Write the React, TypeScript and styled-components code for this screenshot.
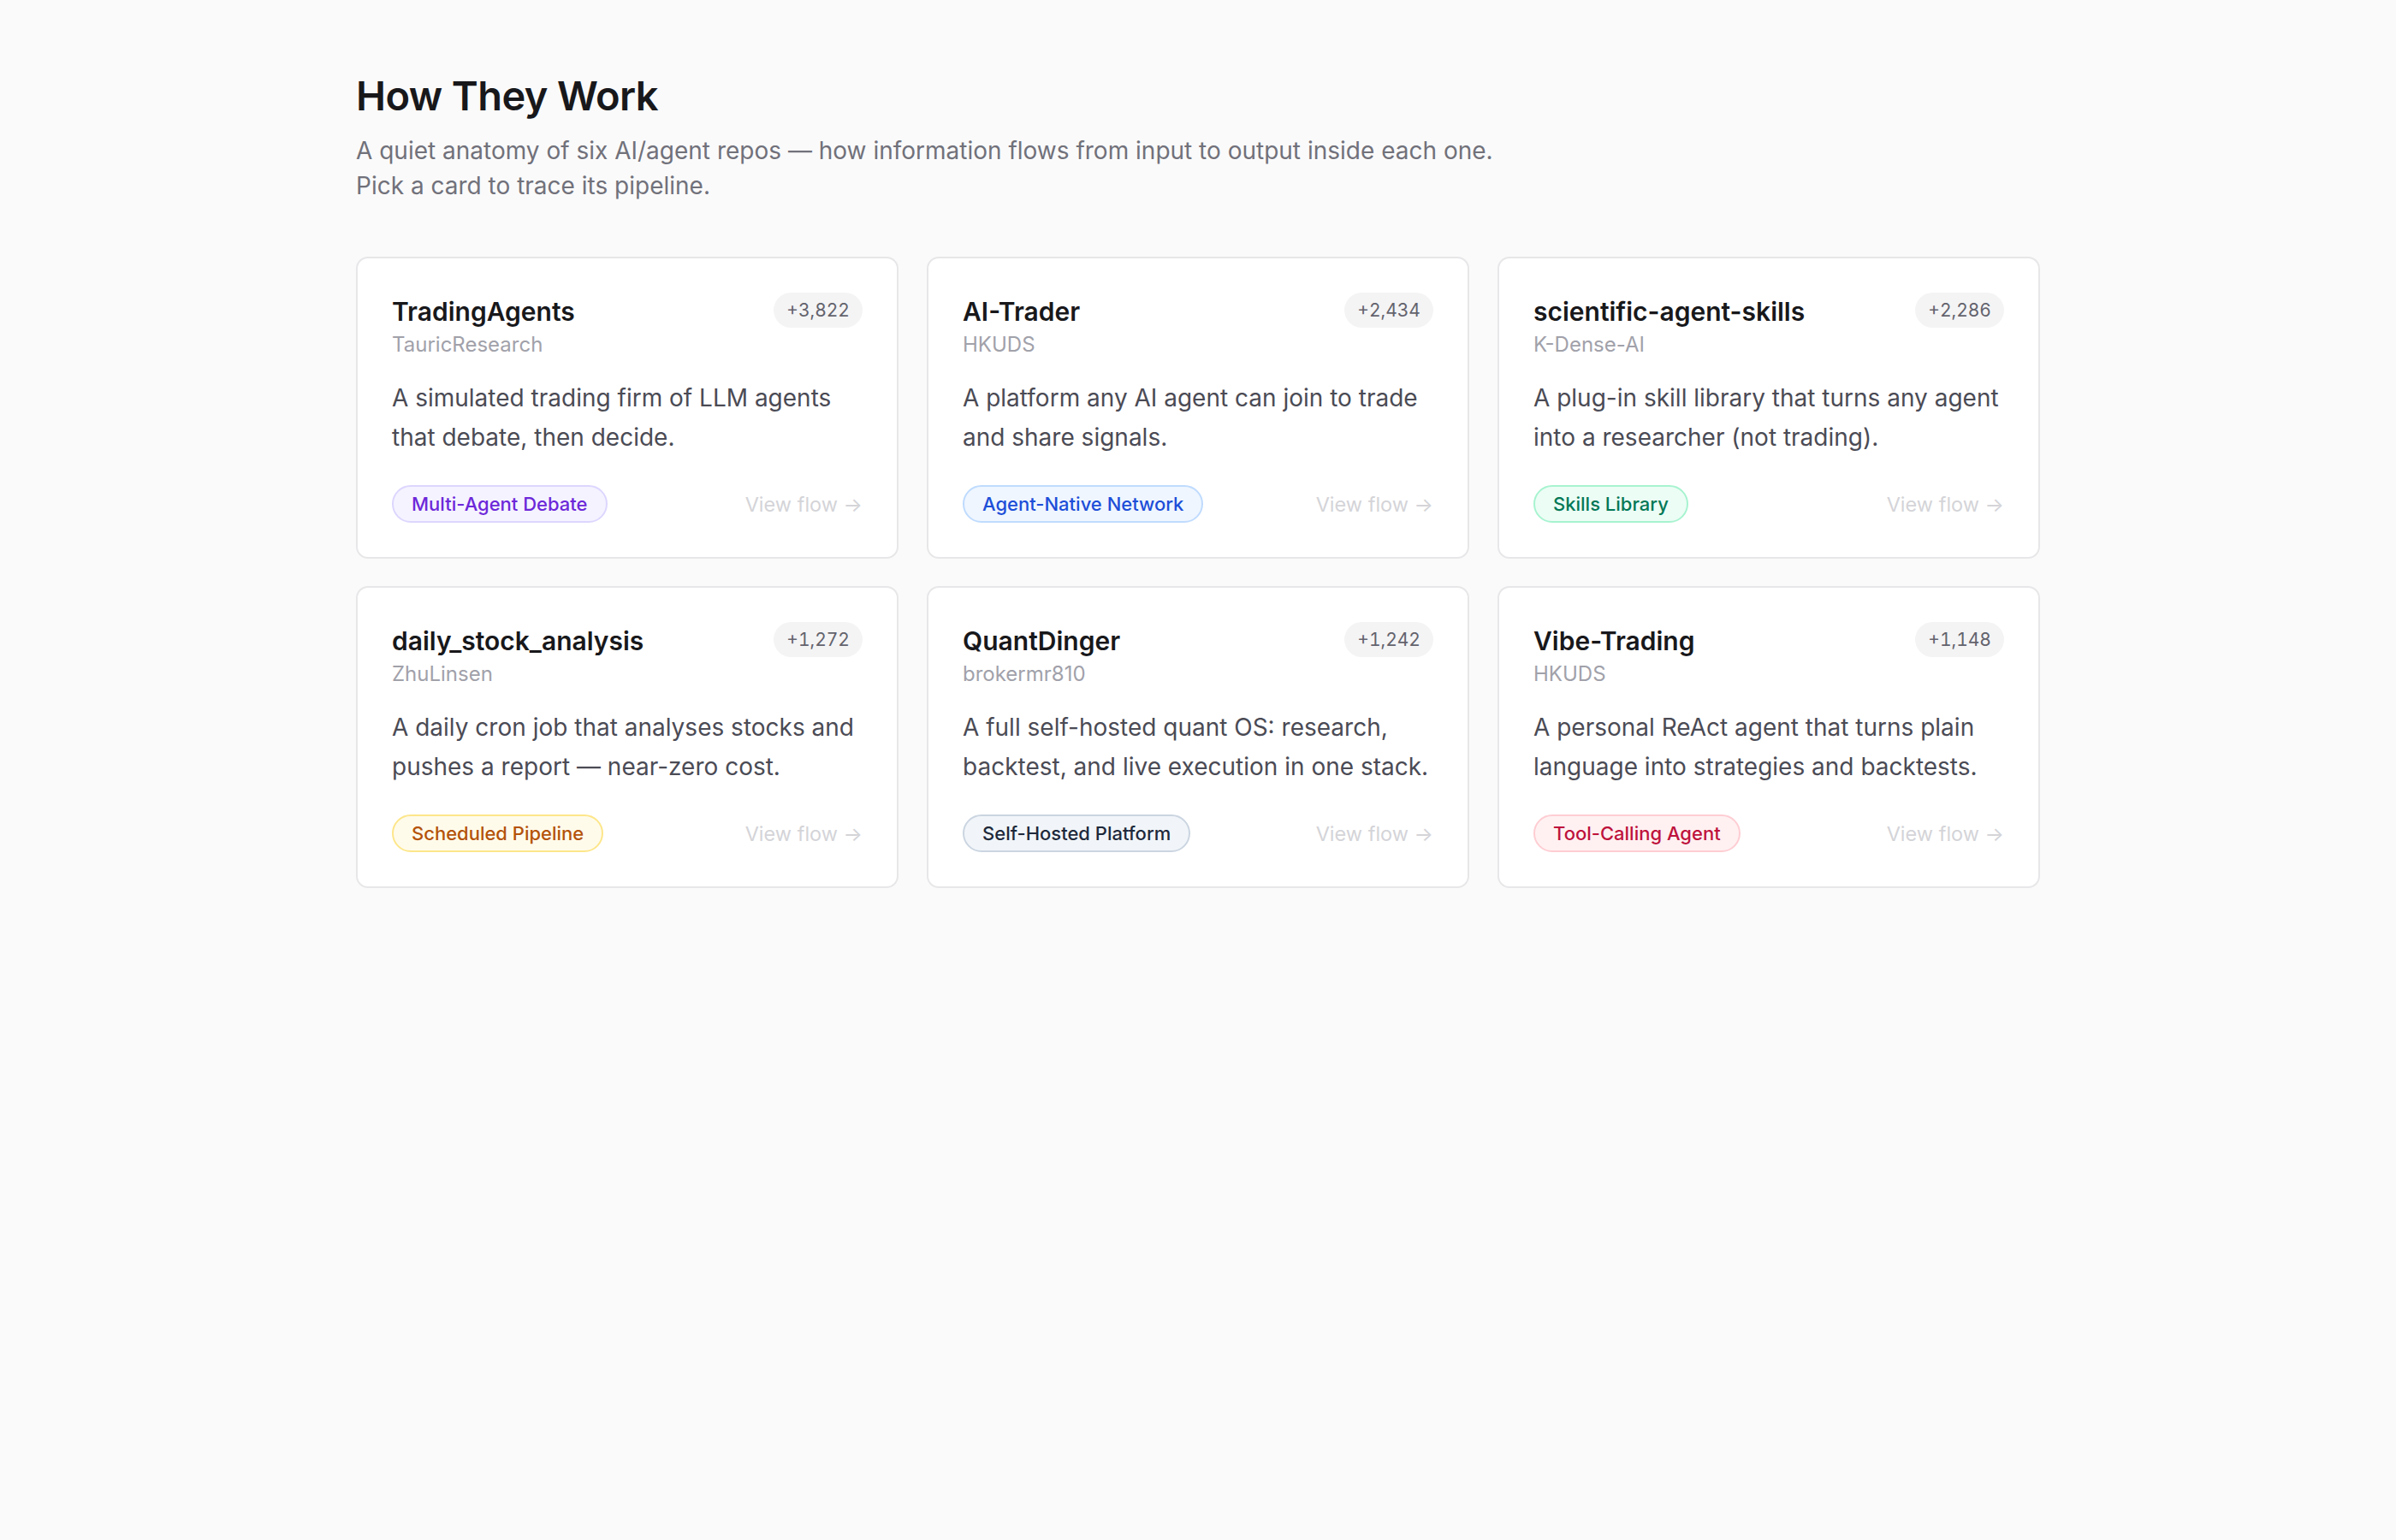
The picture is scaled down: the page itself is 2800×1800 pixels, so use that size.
import React from 'react';
import styled, { createGlobalStyle } from 'styled-components';

type Tone = 'purple' | 'blue' | 'green' | 'amber' | 'slate' | 'rose';

interface Repo {
  name: string;
  owner: string;
  stars: string;
  blurb: string;
  pattern: string;
  tone: Tone;
}

const repos: Repo[] = [
  {
    name: 'TradingAgents',
    owner: 'TauricResearch',
    stars: '+3,822',
    blurb: 'A simulated trading firm of LLM agents that debate, then decide.',
    pattern: 'Multi-Agent Debate',
    tone: 'purple',
  },
  {
    name: 'AI-Trader',
    owner: 'HKUDS',
    stars: '+2,434',
    blurb: 'A platform any AI agent can join to trade and share signals.',
    pattern: 'Agent-Native Network',
    tone: 'blue',
  },
  {
    name: 'scientific-agent-skills',
    owner: 'K-Dense-AI',
    stars: '+2,286',
    blurb: 'A plug-in skill library that turns any agent into a researcher (not trading).',
    pattern: 'Skills Library',
    tone: 'green',
  },
  {
    name: 'daily_stock_analysis',
    owner: 'ZhuLinsen',
    stars: '+1,272',
    blurb: 'A daily cron job that analyses stocks and pushes a report \u2014 near-zero cost.',
    pattern: 'Scheduled Pipeline',
    tone: 'amber',
  },
  {
    name: 'QuantDinger',
    owner: 'brokermr810',
    stars: '+1,242',
    blurb: 'A full self-hosted quant OS: research, backtest, and live execution in one stack.',
    pattern: 'Self-Hosted Platform',
    tone: 'slate',
  },
  {
    name: 'Vibe-Trading',
    owner: 'HKUDS',
    stars: '+1,148',
    blurb: 'A personal ReAct agent that turns plain language into strategies and backtests.',
    pattern: 'Tool-Calling Agent',
    tone: 'rose',
  },
];

const tones: Record<Tone, { fg: string; bg: string; border: string }> = {
  purple: { fg: '#6d28d9', bg: '#f5f3ff', border: '#ddd6fe' },
  blue: { fg: '#1d4ed8', bg: '#eff6ff', border: '#bfdbfe' },
  green: { fg: '#047857', bg: '#ecfdf5', border: '#a7f3d0' },
  amber: { fg: '#b45309', bg: '#fffbeb', border: '#fde68a' },
  slate: { fg: '#1e293b', bg: '#f1f5f9', border: '#cbd5e1' },
  rose: { fg: '#be123c', bg: '#fff1f2', border: '#fecdd3' },
};

const GlobalStyle = createGlobalStyle`
  html, body {
    margin: 0;
    padding: 0;
    background: #fafafa;
  }
  body {
    font-family: Inter, "Noto Sans", "Liberation Sans", sans-serif;
    color: #18181b;
    -webkit-font-smoothing: antialiased;
  }
  * { box-sizing: border-box; }
`;

const Page = styled.main`
  min-height: 1800px;
  padding: 84px 0 80px;
`;

const Wrap = styled.div`
  max-width: 1968px;
  margin: 0 auto;
`;

const Heading = styled.h1`
  margin: 0;
  font-size: 47px;
  line-height: 55px;
  font-weight: 600;
  letter-spacing: -0.6px;
  color: #18181b;
`;

const Lead = styled.p`
  margin: 17px 0 0;
  max-width: 1370px;
  font-size: 28px;
  line-height: 41px;
  color: #71717a;
`;

const Grid = styled.div`
  display: grid;
  grid-template-columns: repeat(3, 1fr);
  gap: 32px 33px;
  margin-top: 62px;
`;

const Card = styled.article`
  display: flex;
  flex-direction: column;
  padding: 40px 40px;
  background: #ffffff;
  border: 2px solid #e7e7e9;
  border-radius: 14px;
  cursor: pointer;
`;

const Head = styled.div`
  display: flex;
  justify-content: space-between;
  align-items: flex-start;
  gap: 16px;
`;

const Name = styled.h2`
  margin: 0;
  font-size: 30px;
  line-height: 44px;
  font-weight: 600;
  color: #18181b;
`;

const Owner = styled.div`
  font-size: 24px;
  line-height: 34px;
  color: #a1a1aa;
`;

const Stars = styled.span`
  flex-shrink: 0;
  display: inline-flex;
  align-items: center;
  height: 41px;
  padding: 0 15px;
  border-radius: 999px;
  background: #f4f4f5;
  font-size: 21px;
  color: #63636d;
  font-variant-numeric: tabular-nums;
`;

const Blurb = styled.p`
  margin: 22px 0 0;
  font-size: 28px;
  line-height: 46px;
  color: #4b4b55;
`;

const Foot = styled.div`
  display: flex;
  justify-content: space-between;
  align-items: center;
  margin-top: 33px;
`;

const Pattern = styled.span<{ $tone: Tone }>`
  display: inline-flex;
  align-items: center;
  height: 44px;
  padding: 0 21px;
  border-radius: 999px;
  border: 2px solid ${(p) => tones[p.$tone].border};
  background: ${(p) => tones[p.$tone].bg};
  color: ${(p) => tones[p.$tone].fg};
  font-size: 22px;
  font-weight: 500;
`;

const FlowLink = styled.span`
  font-size: 23.5px;
  color: #d4d4d8;
`;

const RepoCard: React.FC<{ repo: Repo }> = ({ repo }) => (
  <Card>
    <Head>
      <div>
        <Name>{repo.name}</Name>
        <Owner>{repo.owner}</Owner>
      </div>
      <Stars>{repo.stars}</Stars>
    </Head>
    <Blurb>{repo.blurb}</Blurb>
    <Foot>
      <Pattern $tone={repo.tone}>{repo.pattern}</Pattern>
      <FlowLink>View flow &rarr;</FlowLink>
    </Foot>
  </Card>
);

const App: React.FC = () => (
  <>
    <GlobalStyle />
    <Page>
      <Wrap>
        <Heading>How They Work</Heading>
        <Lead>
          A quiet anatomy of six AI/agent repos — how information flows from input to output
          inside each one. Pick a card to trace its pipeline.
        </Lead>
        <Grid>
          {repos.map((r) => (
            <RepoCard key={r.name} repo={r} />
          ))}
        </Grid>
      </Wrap>
    </Page>
  </>
);

export default App;
